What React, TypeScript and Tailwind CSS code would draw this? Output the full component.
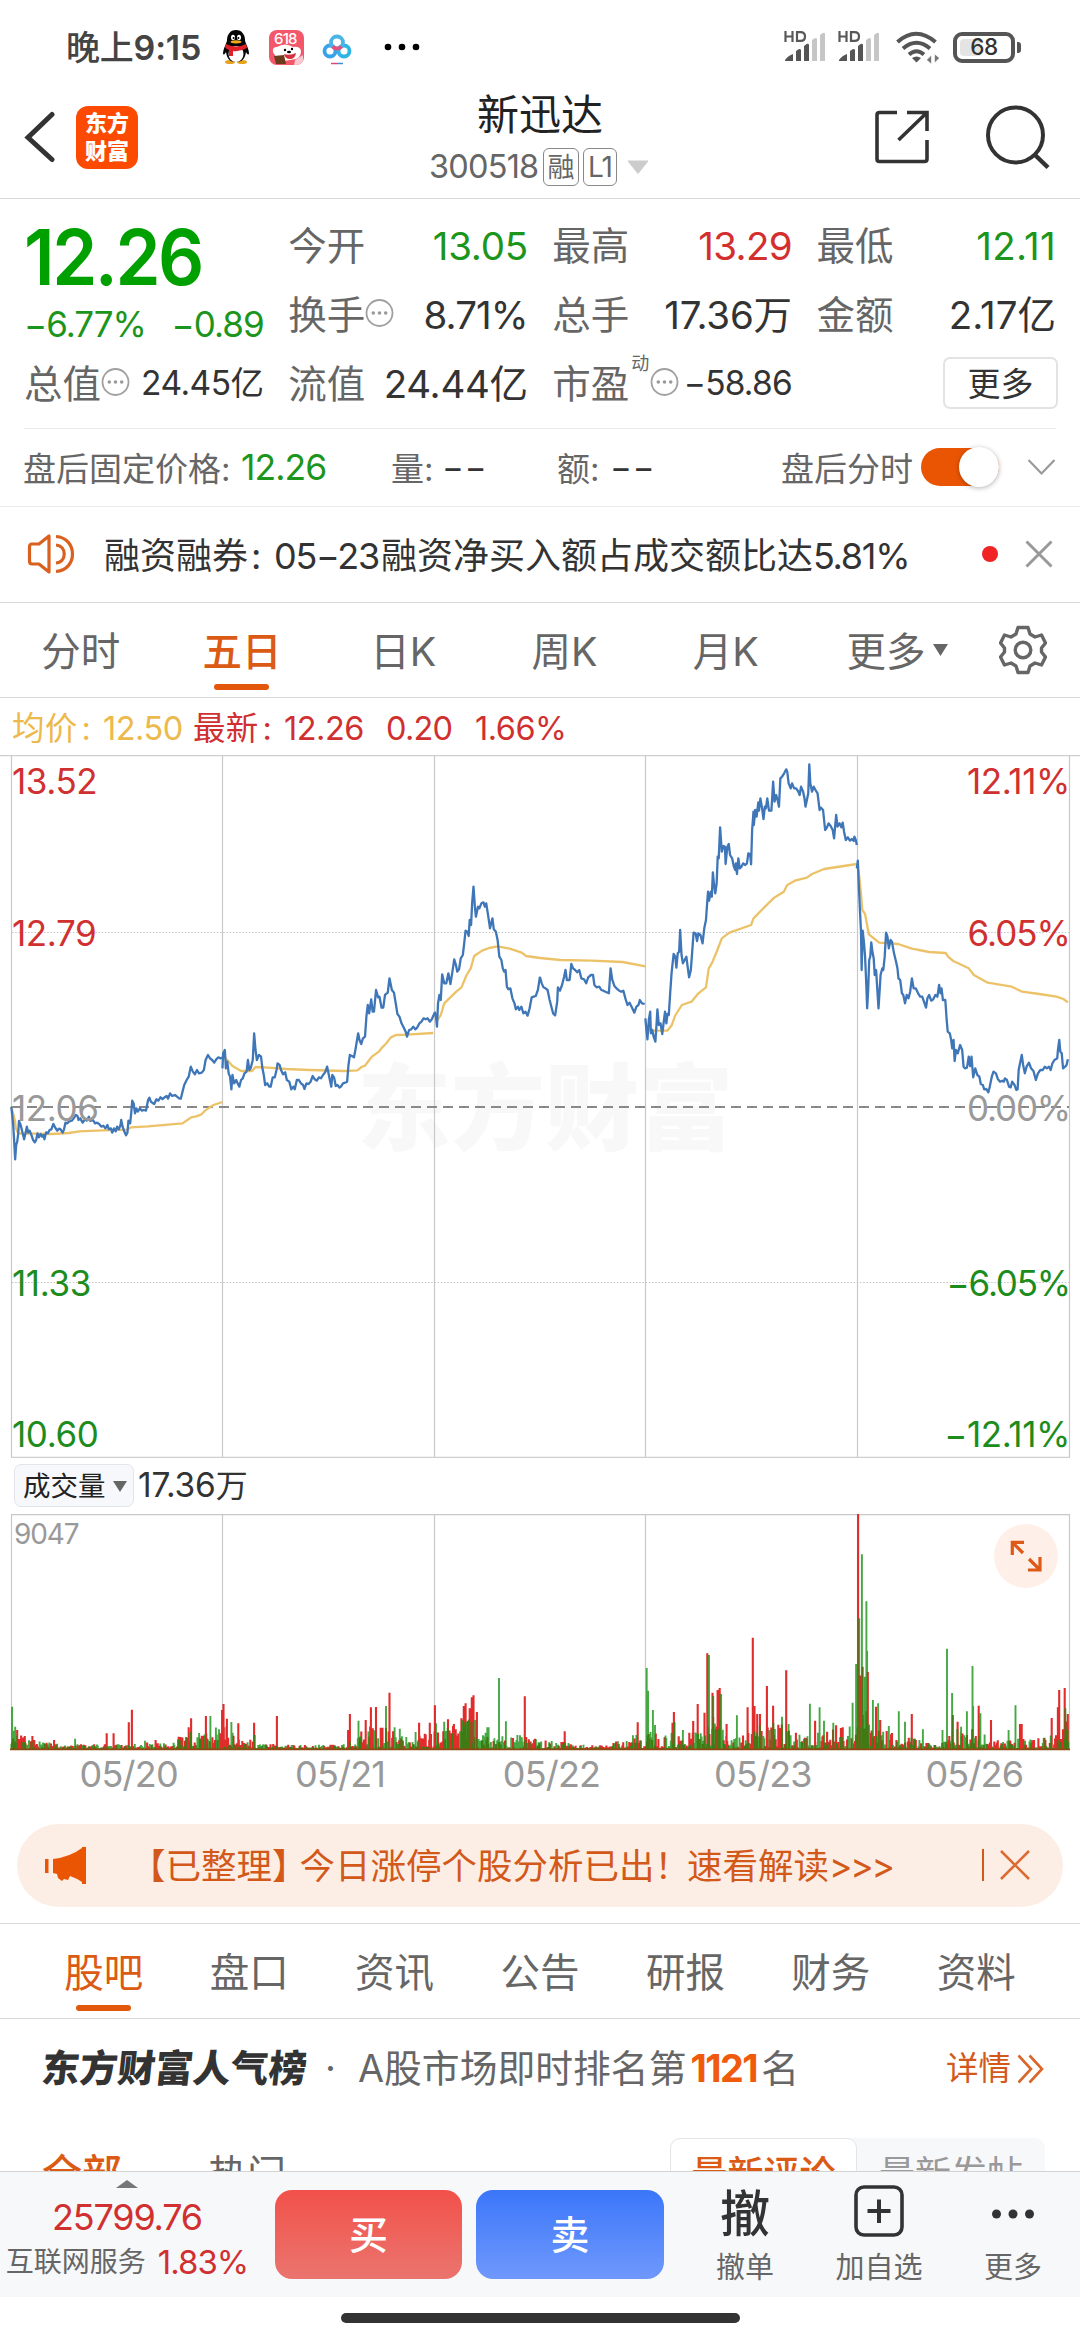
import React from "react";

type Pt = string;

/* ---------- price chart data ---------- */
const priceLeft: Pt[] = [
  "33,1101 38,1150 41,1200 44,1258 47,1215 50,1205 53,1180 55,1143 60,1155 64,1172 70,1198 74,1180 78,1160 82,1178 86,1172 90,1182 96,1200 101,1207 105,1200 109,1180 113,1192 118,1182 122,1190 126,1185 129,1198 134,1177 139,1180 144,1170 149,1168 155,1152 160,1162 166,1172 171,1166 176,1168 182,1178 186,1168 190,1148 195,1150 200,1145 205,1143 209,1142 214,1135 220,1125 225,1128 228,1140 233,1135 240,1148 247,1138 252,1142 258,1130 262,1143 270,1140 276,1150 282,1148 288,1152 294,1160 300,1157 306,1165 312,1155 316,1168 322,1165 326,1178 331,1165 336,1174 340,1160 345,1168 350,1155 352,1140 356,1160 360,1172 366,1186 370,1178 373,1142 378,1150 381,1120 384,1082 388,1090 392,1120 396,1105 400,1115 406,1105 412,1112 418,1110 424,1112 430,1080 434,1073 438,1085 442,1088 448,1092 454,1078 460,1082 466,1072 472,1077 478,1072 484,1068 488,1076 494,1060 500,1068 508,1065 514,1070 520,1075 525,1076 530,1055 535,1035 542,1020 548,1010 554,980 560,995 566,1003 572,990 578,1000 586,998 592,990 597,960 604,945 610,955 616,960 622,968 628,958 634,952 640,955 646,953",
  "646,985 648,940 653,930 656,985 660,965 664,1000 668,1010 672,1048 675,1005 680,1030 686,1020 690,1030 695,1040 700,1020 705,1015 710,1000 716,995 720,960 724,990 728,985 734,960 738,880 742,930 746,960 752,945 758,950 762,985 766,1005 770,1035 776,1030 782,1040 786,1040 792,1012 798,1012 803,990 806,970 812,975 816,990 822,1003 828,997 833,1020 840,1025 846,1048 852,1040 856,1048 862,1020 868,1020 874,1030 880,1035 884,1047 890,1030 896,1032 902,1025 908,1008 914,1018 920,1022 926,1012 932,1015 938,1005 944,997 950,980 955,1005 962,1040 965,1005 970,1012 975,1038 980,1035 986,1043 990,1040 996,1030 1002,1028 1008,1025 1012,975 1016,945 1022,948 1028,952 1032,930 1036,905 1040,880 1044,900 1049,912 1054,895 1060,890 1064,830 1068,795 1072,820 1078,778 1082,815 1086,815 1092,750 1098,772 1102,770 1108,803 1113,803 1118,765 1126,758 1131,715 1138,750 1144,758 1150,795 1154,822 1160,830 1166,850 1172,862 1178,875 1182,890 1188,870 1194,868 1200,860 1206,868 1212,862 1218,850 1224,845 1230,835 1236,838 1242,835 1248,845 1254,838 1258,828 1262,820",
  "1262,815 1266,830 1269,860 1272,790 1276,765 1280,780 1284,703 1290,730 1296,730 1302,700 1308,732 1313,700 1316,680 1319,658 1324,675 1328,695 1333,688 1338,655 1344,645 1348,610 1352,572 1357,575 1361,588 1364,540 1368,555 1371,490 1375,440 1379,500 1382,530 1388,500 1392,505 1398,490 1404,487 1408,500 1412,490 1418,530 1423,565 1430,535 1434,568 1440,575 1445,600 1450,650 1456,660 1460,685 1464,695 1468,690 1472,740 1476,748 1482,745 1488,775 1494,790 1498,808 1504,800 1508,810 1514,800 1520,820 1526,815 1532,827 1538,805 1544,772 1550,770 1556,768 1562,750 1568,710",
];
const priceRight: Pt[] = [
  "0,712 5,730 10,742 16,745 22,750 28,780 33,800 38,820 44,826 50,785 52,742 58,752 64,735 70,710 74,690 78,720 86,720 91,672 96,685 102,690 108,697 114,690 120,715 128,718 134,730 140,712 148,705 154,705 158,735 164,742 172,740 178,750 184,752 190,755 200,760 205,685 210,720 216,738 222,745 230,752 236,755 242,752 248,775 254,795 260,788 266,800 274,818 280,800 286,795 290,780 296,790 304,792",
  "306,835 309,870 312,898 316,840 320,815 322,880 326,870 330,890 335,905 338,860 341,808 345,855 350,850 355,882 360,840 363,815 367,850 370,822 374,825 378,760 382,700 388,642 393,650 396,683 400,640 404,635 407,570 411,645 415,670 420,660 425,650 430,690 433,712 438,690 442,635 446,578 452,580 456,603 460,580 466,585 472,610 477,565 482,540 486,480 488,455 491,482 496,455 499,470 502,397 505,430 509,460 513,430 516,350 519,355 523,262 528,335 533,318 537,320 539,372 544,320 548,312 552,345 558,355 563,380 567,390 569,370 572,402 576,355 580,385 585,380 590,370 596,375 601,370 605,340 610,342 613,373 616,270 620,215 621,255 625,210 629,230 634,187 636,212 640,175 645,205 649,237 653,200 656,205 660,175 665,212 672,212 677,125 681,185 686,165 690,180 694,200 698,115 703,110 709,100 715,88 718,95 722,130 728,145 732,130 738,145 744,145 750,155 754,165 758,140 764,155 768,175 771,200 775,180 779,160 782,73 785,130 790,155 795,140 800,150 806,160 812,210 816,203 822,210 828,270 832,265 838,250 844,258 850,270 854,295 860,225 864,260 870,250 875,262 879,248 883,275 888,300 894,292 900,302 906,297 911,303 913,290 917,300 920,315",
  "920,385 923,362 926,440 930,530 932,570 934,690 937,572 941,610 944,650 947,720 950,805 953,750 956,660 959,650 962,607 966,640 969,655 972,705 976,690 979,740 983,805 987,740 989,705 994,685 997,690 1001,650 1005,578 1009,590 1013,625 1018,600 1022,605 1028,640 1034,665 1038,685 1041,715 1046,720 1051,760 1055,765 1060,790 1065,765 1070,775 1075,755 1080,715 1085,745 1091,745 1098,760 1104,770 1110,770 1115,785 1121,803 1125,775 1130,765 1136,782 1142,778 1148,765 1154,770 1159,735 1163,760 1166,745 1170,780 1177,780 1181,840 1184,875 1190,880 1194,900 1197,925 1201,900 1204,963 1208,930 1213,940 1220,915 1226,930 1230,980 1234,985 1240,983 1245,950 1249,978 1253,950 1258,1012 1264,985 1270,1005 1276,1010 1280,1032 1286,1035 1290,1048 1296,1047 1302,1057 1306,1040 1312,1010 1317,995 1324,1000 1330,1018 1336,1025 1342,1022 1347,1025 1350,1015 1356,1020 1362,1040 1367,1042 1371,1025 1378,1035 1383,1050 1387,1048 1390,990 1394,970 1399,945 1403,975 1408,1000 1413,980 1420,968 1426,985 1433,993 1440,1020 1446,1000 1453,990 1460,990 1466,980 1472,985 1478,980 1483,990 1488,970 1494,960 1502,955 1504,930 1508,900 1511,935 1515,940 1519,985 1525,980 1529,975 1533,958",
];
const avgLeft: Pt[] = [
  "33,1101 38,1120 43,1140 46,1165 52,1178 60,1181 100,1181 150,1182 200,1179 230,1174 300,1171 370,1169 380,1162 430,1159 530,1150 540,1143 555,1132 570,1129 585,1123 595,1112 605,1105 620,1095 646,1086",
  "650,950 660,960 675,978 690,987 700,993 732,993 742,981 780,983 830,987 900,990 1000,993 1038,991 1050,981 1060,977 1070,963 1080,950 1100,935 1110,922 1120,912 1135,892 1150,885 1180,884 1258,879",
  "1264,830 1272,838 1280,825 1290,790 1310,770 1325,755 1340,742 1355,705 1367,685 1377,648 1400,632 1420,624 1445,619 1480,626 1515,638 1528,648 1568,654",
];
const avgRight: Pt[] = [
  "0,654 60,660 150,662 240,666 306,679",
  "310,880 318,866 330,872 370,872 383,855 392,828 412,795 440,785 460,760 482,742 490,685 500,668 515,630 528,595 550,578 613,555 620,535 660,493 680,473 708,455 718,435 740,422 775,413 790,402 825,387 920,372",
  "920,372 926,400 932,460 936,510 944,522 948,545 955,583 985,608 1040,612 1080,626 1130,636 1178,639 1185,650 1200,663 1245,685 1260,705 1300,728 1370,740 1400,755 1450,762 1500,770 1520,777 1533,787",
];

/* ---------- volume chart data ---------- */
type Bar = [number, number, "r" | "g"];
const envelope: [number, number][] = [
  [33, 60], [60, 42], [110, 22], [180, 12], [370, 14], [420, 18], [500, 14], [540, 50], [600, 60], [650, 75], [700, 35], [760, 15],
  [950, 10], [1000, 14], [1050, 60], [1120, 80], [1150, 50], [1200, 30], [1230, 45], [1300, 65], [1370, 100], [1390, 60], [1440, 35],
  [1510, 42], [1568, 28], [1690, 14], [1760, 8], [1800, 30], [1870, 50], [1900, 50], [1970, 45], [2040, 50], [2060, 110], [2100, 90],
  [2120, 24], [2170, 45], [2210, 75], [2270, 80], [2330, 50], [2420, 60], [2470, 70], [2485, 130], [2495, 240], [2520, 110], [2550, 60],
  [2620, 45], [2690, 18], [2730, 14], [2770, 60], [2840, 70], [2880, 25], [2970, 35], [3010, 30], [3070, 50], [3105, 90],
];
const reds: [number, number][] = [
  [50, 60], [72, 42], [94, 42], [157, 30], [310, 50], [330, 50], [374, 83], [383, 121], [452, 30], [519, 40], [548, 68], [555, 95],
  [598, 102], [645, 120], [649, 138], [659, 94], [692, 80], [738, 82], [804, 102], [1011, 60], [1016, 108], [1062, 90], [1077, 128],
  [1092, 129], [1131, 172], [1217, 82], [1248, 82], [1263, 134], [1301, 92], [1340, 95], [1347, 132], [1352, 140], [1364, 125],
  [1370, 158], [1375, 164], [1385, 114], [1524, 161], [1640, 56], [1852, 83], [1953, 82], [1957, 114], [2013, 87], [2026, 138],
  [2046, 112], [2054, 290], [2069, 172], [2084, 180], [2090, 186], [2110, 78], [2171, 128], [2186, 337], [2191, 132], [2199, 108],
  [2207, 108], [2227, 192], [2245, 133], [2283, 239], [2367, 88], [2402, 55], [2428, 74], [2492, 708], [2505, 250], [2520, 234],
  [2544, 130], [2556, 90], [2648, 108], [2767, 105], [2781, 85], [2842, 133], [2878, 90], [2962, 78], [2967, 78], [3054, 96],
  [3072, 128], [3076, 180], [3092, 186], [3101, 108],
];
const greens: [number, number][] = [
  [35, 130], [44, 70], [218, 34], [421, 28], [611, 102], [636, 62], [672, 84], [740, 45], [1041, 88], [1121, 132], [1146, 68],
  [1161, 64], [1207, 54], [1266, 80], [1290, 85], [1355, 85], [1380, 90], [1415, 68], [1419, 68], [1449, 216], [1469, 86],
  [1878, 246], [1882, 178], [1896, 120], [1902, 75], [1959, 84], [1983, 60], [2059, 285], [2071, 162], [2094, 168], [2140, 104],
  [2246, 82], [2271, 100], [2290, 78], [2352, 139], [2380, 128], [2393, 88], [2420, 82], [2476, 142], [2486, 258], [2495, 395],
  [2503, 587], [2511, 220], [2516, 446], [2518, 297], [2535, 150], [2550, 140], [2581, 72], [2610, 116], [2628, 85], [2680, 62],
  [2737, 60], [2750, 304], [2765, 171], [2791, 70], [2808, 116], [2824, 252], [2826, 132], [2847, 110], [2929, 60], [2949, 134],
  [3094, 125],
];

function envelopeAt(x: number) {
  for (let i = 1; i < envelope.length; i++) {
    const [x1, h1] = envelope[i];
    if (x <= x1) {
      const [x0, h0] = envelope[i - 1];
      return h0 + ((h1 - h0) * (x - x0)) / (x1 - x0);
    }
  }
  return envelope[envelope.length - 1][1];
}

function buildBars(): Bar[] {
  let seed = 20250526;
  const rnd = () => {
    seed = (seed * 1664525 + 1013904223) % 4294967296;
    return seed / 4294967296;
  };
  const bars: Bar[] = [];
  for (let x = 33; x < 3104; x += 2.56) {
    const h = 5 + envelopeAt(x) * Math.pow(rnd(), 1.6);
    bars.push([x, h, rnd() > 0.42 ? "r" : "g"]);
  }
  reds.forEach(([x, h]) => bars.push([x, h, "r"]));
  greens.forEach(([x, h]) => bars.push([x, h, "g"]));
  return bars.sort((a, b) => a[0] - b[0]);
}
const bars = buildBars();
const barPath = (c: "r" | "g") =>
  bars
    .filter((b) => b[2] === c)
    .map(([x, h]) => `M${(x / 2.904).toFixed(1)} 236v-${(h / 3).toFixed(1)}`)
    .join("");

const gridX = [11.5, 222.5, 434.5, 645.5, 857.5, 1069.5];

function Lines({ sets, color, x }: { sets: Pt[]; color: string; x: number }) {
  return (
    <g transform={`translate(${x} -15) scale(0.34436 0.33333)`}>
      {sets.map((p, i) => (
        <polyline key={i} points={p} fill="none" stroke={color} strokeWidth="2.3" strokeLinejoin="round" vectorEffect="non-scaling-stroke" />
      ))}
    </g>
  );
}

function PriceChart() {
  return (
    <div className="relative h-[703px] w-full">
      <div className="absolute left-[357px] top-[294px] flex h-[120px] items-center text-[94px] font-black leading-none text-[#f8f8f8]">东方财富</div>
      <svg className="absolute inset-0" width="1080" height="703" viewBox="0 0 1080 703">
        <path d="M0 .5H1080M11 702.5H1070" stroke="#cfcfcf" strokeWidth="1.4" fill="none" />
        {gridX.map((x) => (
          <path key={x} d={`M${x} 1V702`} stroke="#c8c8c8" strokeWidth="1.2" />
        ))}
        <path d="M12 177.5H1069M12 527.5H1069" stroke="#c4c4c4" strokeWidth="1.2" strokeDasharray="1.5 1.7" />
        <path d="M11 352H1069" stroke="#888" strokeWidth="2" strokeDasharray="10 6" />
        <Lines sets={avgLeft} color="#ecc268" x={0} />
        <Lines sets={avgRight} color="#ecc268" x={540} />
        <Lines sets={priceLeft} color="#3f76b8" x={0} />
        <Lines sets={priceRight} color="#3f76b8" x={540} />
      </svg>
      <AxisLabel cls="left-[12px] top-[6px] text-[#d03030]">13.52</AxisLabel>
      <AxisLabel cls="left-[12px] top-[158px] text-[#d03030]">12.79</AxisLabel>
      <AxisLabel cls="left-[12px] top-[333px] text-[#999]">12.06</AxisLabel>
      <AxisLabel cls="left-[12px] top-[508px] text-[#1c8c1c]">11.33</AxisLabel>
      <AxisLabel cls="left-[12px] top-[659px] text-[#1c8c1c]">10.60</AxisLabel>
      <AxisLabel cls="right-[10px] top-[6px] text-[#d03030]">12.11%</AxisLabel>
      <AxisLabel cls="right-[10px] top-[158px] text-[#d03030] tracking-[-1px]">6.05%</AxisLabel>
      <AxisLabel cls="right-[10px] top-[333px] text-[#999] tracking-[-1.200px]">0.00%</AxisLabel>
      <AxisLabel cls="right-[10px] top-[508px] text-[#1c8c1c] tracking-[-1.200px]">−6.05%</AxisLabel>
      <AxisLabel cls="right-[10px] top-[659px] text-[#1c8c1c]">−12.11%</AxisLabel>
    </div>
  );
}

function AxisLabel({ cls, children }: { cls: string; children: React.ReactNode }) {
  return (
    <span className={`absolute text-[35px] leading-[40px] ${cls.includes("tracking") ? "" : "tracking-[-0.4px]"} ${cls}`}>{children}</span>
  );
}

function VolumeChart() {
  return (
    <div className="relative h-[237px] w-full">
      <svg className="absolute inset-0" width="1080" height="237" viewBox="0 0 1080 237">
        <path d="M11 .5H1070" stroke="#c8c8c8" strokeWidth="1.4" />
        {gridX.map((x) => (
          <path key={x} d={`M${x} 1V236`} stroke="#c8c8c8" strokeWidth="1.2" />
        ))}
        <path d={barPath("r")} stroke="#e02424" strokeWidth="2.1" opacity=".96" />
        <path d={barPath("g")} stroke="#12900f" strokeWidth="1.9" opacity=".78" />
        <path d="M10 235.3H1070" stroke="#8c4a12" strokeWidth="1.8" />
      </svg>
      <span className="absolute left-[14px] top-[4px] text-[28px] leading-[32px] tracking-[-1.100px] text-[#999]">9047</span>
      <div className="absolute right-[22px] top-[10px] flex size-[64px] items-center justify-center rounded-full bg-[#fef0e8]">
        <svg width="32" height="32" viewBox="0 0 32 32" fill="none" stroke="#dd5a18" strokeWidth="3.2">
          <path d="M14 2.300H2.300V15M2.500 2.500L13 13M18 30H30V17M30 30L19 19" />
        </svg>
      </div>
    </div>
  );
}

/* ---------- small icons ---------- */
function Signal() {
  return (
    <svg width="42" height="36" viewBox="0 0 42 36">
      <g fill="none" stroke="#585858" strokeWidth="2.2">
        <path d="M1.500 2v11M8.500 2v11M1.500 7.500h7M13 3.100h3.500c3 0 4.500 1.800 4.500 4.400s-1.500 4.400-4.500 4.400H13z" />
      </g>
      <path d="M1 32v-1c2-3 5-5 8-6v7zM12 32V22l3-2q2 0 2 1v11zM20 32V17l3-2.200q2 0 2 1V32z" fill="#555" />
      <path d="M28 32V11l3-2q2 0 2 1v22zM36 32V6l3-2.200q2 0 2 1V32z" fill="#c6c6c6" />
    </svg>
  );
}

function InfoDots() {
  return (
    <svg width="29" height="30" viewBox="0 0 29 30" className="mb-[4px] shrink-0">
      <circle cx="14.500" cy="15" r="13" fill="none" stroke="#a0a0a0" strokeWidth="1.800" />
      <g fill="#999">
        <circle cx="8.300" cy="15" r="1.800" />
        <circle cx="14.500" cy="15" r="1.800" />
        <circle cx="20.700" cy="15" r="1.800" />
      </g>
    </svg>
  );
}

function StatusBar() {
  return (
    <div className="flex h-[94px] items-center pl-[66px]">
      <span className="w-[148px] whitespace-nowrap pt-[2px] text-[34px] font-medium leading-none tracking-[-0.2px] text-[#444]">
        晚上<span className="font-semibold">9:15</span>
      </span>
      <svg className="ml-[5px]" width="34" height="36" viewBox="0 0 34 36">
        <ellipse cx="11" cy="33" rx="5" ry="2" fill="#e8a21c" />
        <ellipse cx="23" cy="33" rx="5" ry="2" fill="#e8a21c" />
        <path d="M17 1c-6 0-9 5-9 10 0 3-4 8-4 14 1 1 2 0 3-2 1 7 4 10 10 10s9-3 10-10c1 2 2 3 3 2 0-6-4-11-4-14 0-5-3-10-9-10z" fill="#050505" />
        <ellipse cx="17" cy="25" rx="7.500" ry="8" fill="#fff" />
        <ellipse cx="14" cy="8.500" rx="2" ry="2.800" fill="#fff" />
        <ellipse cx="20" cy="8.500" rx="2" ry="2.800" fill="#fff" />
        <circle cx="14.600" cy="9" r="1" /><circle cx="19.400" cy="9" r="1" />
        <ellipse cx="17" cy="12.800" rx="5.500" ry="1.600" fill="#f0a81c" />
        <path d="M7 15q10 5 20 0l1 4q-7 4-14 3v5h-4v-6q-3-1-4-3z" fill="#e2202a" />
      </svg>
      <div className="relative ml-[16px] h-[35px] w-[35px] overflow-hidden rounded-[8px] bg-[#f4566a]">
        <span className="absolute left-[5px] top-0 text-[15px] font-medium leading-[18px] tracking-[-0.8px] text-white">618</span>
        <svg className="absolute inset-0" width="35" height="35" viewBox="0 0 35 35">
          <path d="M4 22q-1-5 4-5 8-5 16 0 7-1 8 4 0 6-5 8l-12 2-8-4z" fill="#fff" />
          <circle cx="16" cy="20" r="1.200" /><circle cx="23" cy="19" r="1.200" /><ellipse cx="20" cy="22" rx="2" ry="1.200" />
          <path d="M15 24q6 2 12-1-1 6-6 6-5 0-6-5z" fill="#d8303c" />
          <path d="M5 26l10-1 2 9H7z" fill="#6a3c1c" />
          <path d="M26 30l8-5v10h-9z" fill="#fbc9cf" />
        </svg>
      </div>
      <svg className="ml-[16px]" width="34" height="36" viewBox="0 0 34 36" fill="none" strokeWidth="3.800">
        <circle cx="10" cy="22" r="5.500" stroke="#3aa2e8" />
        <circle cx="24" cy="22" r="5.500" stroke="#2fb4e4" />
        <circle cx="17" cy="13.500" r="6" stroke="#49b5e6" />
        <path d="M12.500 17.500a6 6 0 0 0 9 0" stroke="#e0527c" />
        <path d="M11 34.500h6" stroke="#d94a76" strokeWidth="1.500" /><path d="M17 34.500h6" stroke="#3a8ee0" strokeWidth="1.500" />
      </svg>
      <svg className="ml-[30px]" width="36" height="8" viewBox="0 0 36 8">
        <circle cx="4" cy="4" r="3.300" /><circle cx="18" cy="4" r="3.300" /><circle cx="32" cy="4" r="3.300" />
      </svg>
      <div className="ml-[364px] flex items-center">
        <Signal />
        <span className="w-[12px]" />
        <Signal />
        <svg className="ml-[15px]" width="44" height="36" viewBox="0 0 44 36" fill="none" stroke="#555" strokeWidth="4">
          <path d="M2.500 13Q21 -3.500 40.500 13" />
          <path d="M8 19.500Q21.500 8 35 19.500" />
          <path d="M14 25.500Q21.500 19 29 25.500" />
          <path d="M17 29q4.500-3 9 0l-4.500 4.500z" fill="#555" stroke="none" />
          <path d="M36.500 35v-9l-5 5zM39.500 25v9l5-5z" fill="#777" stroke="#fff" strokeWidth=".6" />
        </svg>
        <div className="relative ml-[14px] flex h-[31px] w-[62px] items-center justify-center rounded-[9px] border-4 border-[#555]">
          <span className="absolute left-[3px] top-[3px] h-[17px] w-[20px] rounded-l-[4px] bg-[#e4e4e4]" />
          <span className="relative text-[22.500px] font-medium leading-none tracking-[-0.4px] text-[#333]">68</span>
        </div>
        <span className="ml-[2px] h-[11px] w-[4px] rounded-r-[3px] bg-[#555]" />
      </div>
    </div>
  );
}

function Header() {
  return (
    <header className="flex h-[105px] items-center border-b-[1.500px] border-[#d9d9d9] pb-[18px] pl-[24px] pr-[28px]">
      <svg width="32" height="52" viewBox="0 0 32 52" fill="none" stroke="#333" strokeWidth="5" strokeLinecap="round">
        <path d="M28 3.500L4 26.500L28 48.500" strokeLinejoin="miter" />
      </svg>
      <div className="ml-[20px] flex h-[63px] w-[62px] flex-col items-center justify-center rounded-[12px] bg-[#fd4a02] text-[22px] font-black leading-[28px] text-white">
        <span className="h-[28px]">东方</span>
        <span className="h-[28px]">财富</span>
      </div>
      <div className="ml-[291px] flex w-[220px] flex-col">
        <h1 className="ml-[48px] text-[42px] font-normal leading-[52px] text-[#222]">新迅达</h1>
        <div className="mt-[7px] flex h-[38px] items-center text-[#666]">
          <span className="w-[114px] pt-[2px] text-[32.500px] leading-none tracking-[-0.8px]">300518</span>
          <span className="flex h-[38px] w-[36px] items-center justify-center rounded-[6px] border-[1.500px] border-[#888] pt-[1px] text-[27px] leading-none">融</span>
          <span className="ml-[4px] flex h-[38px] w-[34px] items-center justify-center rounded-[6px] border-[1.500px] border-[#888] text-[28px] leading-none tracking-[-1px]">L1</span>
          <svg className="ml-[10px]" width="22" height="14" viewBox="0 0 22 14"><path d="M1 1H21L11 13.500z" fill="#ccc" stroke="#ccc" strokeLinejoin="round" /></svg>
        </div>
      </div>
      <svg className="ml-[226px]" width="54" height="54" viewBox="0 0 54 54" fill="none" stroke="#333" strokeWidth="3.600">
        <path d="M22 2.500H4.500Q2 2.500 2 5V49Q2 51.500 4.500 51.500H49.500Q52 51.500 52 49V30M32 2.500H52V21M51.500 3L23.500 30" />
      </svg>
      <svg className="ml-[57px]" width="64" height="66" viewBox="0 0 64 66" fill="none" stroke="#333" strokeWidth="4">
        <circle cx="29.500" cy="31" r="27.500" />
        <path d="M48 50L62 63.500" strokeWidth="4.500" />
      </svg>
    </header>
  );
}

function Cell({ label, value, cls, dots }: { label: string; value: string; cls: string; dots?: boolean }) {
  return (
    <div className="flex h-[69px] items-center justify-between">
      <span className="flex items-center text-[#666]">
        {label}
        {dots && <InfoDots />}
      </span>
      <span className={cls}>{value}</span>
    </div>
  );
}

function Quote() {
  return (
    <section className="mx-[24px] h-[229.500px] border-b-[1.500px] border-[#eaeaea] pt-[12.500px]">
      <div className="grid grid-cols-4 gap-x-[24.500px] whitespace-nowrap text-[38.500px] leading-none">
        <div className="flex h-[138px] flex-col">
          <span className="mt-[6px] origin-left scale-x-[0.94] text-[77px] font-semibold leading-[78px] tracking-[-2.600px] text-[#00a000]">12.26</span>
          <span className="mt-[9px] flex h-[40px] items-center justify-between text-[35px] tracking-[-1px] text-[#1c951c]">
            <span>−6.77%</span>
            <span>−0.89</span>
          </span>
        </div>
        <div>
          <Cell label="今开" value="13.05" cls="text-[#1c951c] tracking-[-0.300px]" />
          <Cell label="换手" value="8.71%" cls="text-[#333] tracking-[-0.900px]" dots />
        </div>
        <div>
          <Cell label="最高" value="13.29" cls="text-[#d42f2f] tracking-[-0.700px]" />
          <Cell label="总手" value="17.36万" cls="text-[#333] tracking-[-0.200px]" />
        </div>
        <div>
          <Cell label="最低" value="12.11" cls="text-[#1c951c] tracking-[0.300px]" />
          <Cell label="金额" value="2.17亿" cls="text-[#333]" />
        </div>
        <Cell label="总值" value="24.45亿" cls="text-[#333] text-[33.500px] tracking-[-0.500px]" dots />
        <Cell label="流值" value="24.44亿" cls="text-[#333] tracking-[-0.300px]" />
        <div className="flex h-[69px] items-center text-[#666]">
          市盈<sup className="mt-[-22px] ml-[2px] text-[18px] leading-none">动</sup>
          <span className="ml-[1px]"><InfoDots /></span>
          <span className="ml-auto text-[33.500px] tracking-[-0.8px] text-[#333]">−58.86</span>
        </div>
        <div className="flex h-[69px] items-center justify-end">
          <span className="-mr-[2px] -mt-[2px] flex h-[52px] w-[115px] items-center justify-center rounded-[7px] border-2 border-[#e3e3e3] pt-[2px] text-[33px] text-[#333]">更多</span>
        </div>
      </div>
    </section>
  );
}

function AfterHours() {
  return (
    <section className="flex h-[78px] items-center whitespace-nowrap border-b-[1.500px] border-[#eaeaea] pl-[23px] text-[33px] leading-none text-[#666]">
      <span className="w-[218px] pt-[4px]">盘后固定价格:</span>
      <span className="w-[150px] pt-[2px] text-[35.500px] tracking-[-0.900px] text-[#1c951c]">12.26</span>
      <span className="w-[51px] pt-[4px]">量:</span>
      <span className="w-[115px] tracking-[1px] text-[#333]">−−</span>
      <span className="w-[53px] pt-[4px]">额:</span>
      <span className="w-[171px] tracking-[1px] text-[#333]">−−</span>
      <span className="w-[140px] pt-[4px]">盘后分时</span>
      <span className="flex h-[38px] w-[78px] items-center justify-end rounded-full bg-[#ea5504]">
        <span className="size-[40px] rounded-full bg-white shadow-[0_1px_5px_rgba(0,0,0,0.3)]" />
      </span>
      <svg className="ml-[28px]" width="29" height="18" viewBox="0 0 29 18" fill="none" stroke="#999" strokeWidth="2.200"><path d="M1.500 2L14.500 15.500L27.500 2" /></svg>
    </section>
  );
}

function News() {
  return (
    <section className="flex h-[96px] items-center whitespace-nowrap border-b-[1.500px] border-[#d9d9d9] pl-[27px] text-[36px] leading-none text-[#333]">
      <svg width="48" height="42" viewBox="0 0 48 42" fill="none" stroke="#d9601f" strokeWidth="3.200" strokeLinejoin="round">
        <path d="M22 3V39L12 31H5Q2.500 31 2.500 28V14Q2.500 11 5 11H12Z" />
        <path d="M29 3.500C51 5 51 37 29 38.500M29 12C40 13 40 29 29 30" />
      </svg>
      <span className="ml-[29px] w-[877px] pt-[4px]">
        融资融券<span className="inline-block w-[26px] pl-[3px]">:</span><span className="tracking-[-1.300px]">05−23</span><span className="ml-[2px]">融资净买入额占成交额比达</span><span className="tracking-[-1.300px]">5.81%</span>
      </span>
      <span className="ml-[1px] size-[16px] rounded-full bg-[#f02424]" />
      <svg className="ml-[27px]" width="28" height="28" viewBox="0 0 28 28" stroke="#999" strokeWidth="3"><path d="M1.500 1.500L26.500 26.500M26.500 1.500L1.500 26.500" /></svg>
    </section>
  );
}

function ChartTabs() {
  const tabs = ["分时", "五日", "日K", "周K", "月K"];
  return (
    <nav className="flex h-[95px] items-center whitespace-nowrap border-b-[1.500px] border-[#d9d9d9] text-[39.500px] leading-none text-[#666]">
      {tabs.map((t, i) => (
        <span key={t} className={`relative flex h-full w-[161.300px] items-center justify-center pt-[6px] ${i === 1 ? "font-medium text-[#db5a14]" : ""}`}>
          {t}
          {i === 1 && <i className="absolute bottom-[7px] h-[6px] w-[55px] rounded-full bg-[#e2570c]" />}
        </span>
      ))}
      <span className="ml-[40px] pt-[6px]">更多</span>
      <svg className="ml-[8px]" width="15" height="12" viewBox="0 0 15 12"><path d="M0 0H15L7.500 12z" fill="#666" /></svg>
      <svg className="ml-[51px]" width="48" height="50" viewBox="0 0 48 50" fill="none" stroke="#666" strokeWidth="3.400" strokeLinejoin="round">
        <path d="M19 2.500h10l2 6.500 5 3 6.500-2 4 8-4 5v4l4 5-4 8-6.500-2-5 3-2 6.500H19l-2-6.500-5-3-6.500 2-4-8 4-5v-4l-4-5 4-8 6.500 2 5-3z" />
        <circle cx="24" cy="25" r="7.800" />
      </svg>
    </nav>
  );
}

function Megaphone() {
  return (
    <svg width="43" height="37" viewBox="0 0 43 37" fill="#ea5504">
      <path d="M1 12h3.500v14H1zM9 12Q26 10 38 1V0h4v37h-4v-2Q32 31 26 29l-2 4-4-1-2 2-4-3-1-4-4-1z" />
    </svg>
  );
}

function Banner() {
  return (
    <div className="mx-[17px] mt-[27px] flex h-[83px] items-center whitespace-nowrap rounded-full bg-[#fceee5] pl-[27px] text-[35.500px] leading-none text-[#d2591a]">
      <Megaphone />
      <span className="ml-[43px] w-[852px] pt-[4px]">
        【已整理<span className="mr-[-8px]">】</span>今日涨停个股分析已出<span className="mr-[-3px]">！</span>速看解读<span className="tracking-[-2.300px]">&gt;&gt;&gt;</span>
      </span>
      <span className="h-[32px] w-[1.500px] bg-[#d2591a]" />
      <svg className="ml-[15px]" width="32" height="32" viewBox="0 0 32 32" stroke="#dd6a30" strokeWidth="2.600"><path d="M2 2L30 30M30 2L2 30" /></svg>
    </div>
  );
}

function ContentTabs() {
  const tabs = ["股吧", "盘口", "资讯", "公告", "研报", "财务", "资料"];
  return (
    <nav className="mt-[16px] flex h-[96px] items-center border-y-[1.500px] border-[#d9d9d9] px-[31px] text-[39.500px] leading-none text-[#666]">
      {tabs.map((t, i) => (
        <span key={t} className={`relative flex h-full flex-1 items-center justify-center pt-[7px] ${i === 0 ? "text-[#db5a14]" : ""}`}>
          {t}
          {i === 0 && <i className="absolute bottom-[7px] h-[6px] w-[55px] rounded-full bg-[#e2570c]" />}
        </span>
      ))}
    </nav>
  );
}

function BottomBar() {
  return (
    <footer className="flex h-[126px] border-t-[1.500px] border-[#d3d3d3] bg-[#f7f8fa] leading-none">
      <div className="flex w-[254px] flex-col items-center whitespace-nowrap">
        <svg className="mt-[8px]" width="22" height="8" viewBox="0 0 22 8"><path d="M0 8L11 0L22 8z" fill="#777" /></svg>
        <span className="mt-[11px] text-[36px] tracking-[-1.200px] text-[#d03030]">25799.76</span>
        <span className="mt-[11px] flex items-center text-[28px] text-[#666]">
          互联网服务<span className="ml-[12px] text-[33px] tracking-[-1px] text-[#d03030]">1.83%</span>
        </span>
      </div>
      <button className="ml-[21px] mt-[18px] h-[89px] w-[187px] rounded-[17px] bg-linear-to-b from-[#f2504a] to-[#ea746e] text-[39px] font-medium text-white">买</button>
      <button className="ml-[14px] mt-[18px] h-[89px] w-[188px] rounded-[17px] bg-linear-to-b from-[#3b76f9] to-[#6f98fc] text-[39px] font-medium text-white">卖</button>
      <div className="flex w-[162px] flex-col items-center pt-[15px]">
        <span className="text-[50px] font-medium leading-[54px] text-[#333]">撤</span>
        <span className="mt-[11px] text-[29px] leading-[32px] text-[#666]">撤单</span>
      </div>
      <div className="flex w-[106px] flex-col items-center pt-[13px]">
        <svg width="50" height="52" viewBox="0 0 50 52" fill="none" stroke="#333" strokeWidth="3.600">
          <rect x="2" y="2" width="46" height="48" rx="8" />
          <path d="M13.500 26h23M25 14.500v23.500" strokeWidth="4" />
        </svg>
        <span className="mt-[15px] text-[29px] leading-[32px] text-[#666]">加自选</span>
      </div>
      <div className="flex flex-1 flex-col items-center pl-[14px] pt-[37px]">
        <svg width="44" height="10" viewBox="0 0 44 10" fill="#333"><circle cx="5.500" cy="5" r="4.500" /><circle cx="22" cy="5" r="4.500" /><circle cx="38.500" cy="5" r="4.500" /></svg>
        <span className="mt-[33px] text-[29px] leading-[32px] text-[#666]">更多</span>
      </div>
    </footer>
  );
}

export default function App() {
  return (
    <div className="h-[2340px] w-[1080px] overflow-hidden bg-white [font-family:Inter,'Noto_Sans_CJK_SC',sans-serif]">
      <StatusBar />
      <Header />
      <Quote />
      <AfterHours />
      <News />
      <ChartTabs />
      <div className="flex h-[57px] items-center whitespace-nowrap pl-[12px] pt-[6px] text-[32.500px] leading-none tracking-[-0.8px] text-[#d03030]">
        <span className="w-[91px] tracking-[0.300px] text-[#ecb94c]">均价<span className="pl-[4px]">:</span></span>
        <span className="w-[90px] tracking-[-0.500px] text-[#ecb94c]">12.50</span>
        <span className="w-[91px] tracking-[0.300px]">最新<span className="pl-[4px]">:</span></span>
        <span className="w-[102px] tracking-[-0.500px]">12.26</span>
        <span className="w-[89px]">0.20</span>
        <span className="tracking-[-0.500px]">1.66%</span>
      </div>
      <PriceChart />
      <div className="flex h-[56px] items-center whitespace-nowrap pl-[14px] leading-none">
        <span className="flex h-[43px] w-[120px] items-center rounded-[7px] border-[1.500px] border-[#e2e5ec] bg-[#f7f8fb] pl-[8px] pt-[2px] text-[27.500px] text-[#222]">
          成交量
          <svg className="ml-[7px]" width="14" height="11" viewBox="0 0 14 11"><path d="M0 0H14L7 11z" fill="#666" /></svg>
        </span>
        <span className="ml-[4px] pt-[1px] text-[33.500px] tracking-[-0.200px] text-[#333]">17.36<span className="text-[32px]">万</span></span>
      </div>
      <VolumeChart />
      <div className="flex h-[46px] items-center pl-[23px] text-[36px] leading-none tracking-[-0.8px] text-[#999]">
        {["05/20", "05/21", "05/22", "05/23", "05/26"].map((d) => (
          <span key={d} className="w-[211.600px] text-center">{d}</span>
        ))}
      </div>
      <Banner />
      <ContentTabs />
      <div className="h-[152px] overflow-hidden">
        <div className="flex h-[98px] items-center whitespace-nowrap pl-[42px] pt-[3px] text-[37.800px] leading-none text-[#666]">
          <span className="inline-block w-[283px] -skew-x-6 font-black text-[#333]">东方财富人气榜</span>
          <span className="w-[33px]">·</span>
          <span>A股市场即时排名第</span>
          <span className="mx-[4px] font-bold tracking-[-1.500px] text-[#f05a0c]">1121</span>
          <span>名</span>
          <span className="ml-auto text-[32.500px] text-[#d2591a]">详情</span>
          <svg className="ml-[6px] mr-[35px]" width="28" height="30" viewBox="0 0 28 30" fill="none" stroke="#d9662a" strokeWidth="2.600"><path d="M1.500 1.500L14 15L1.500 28.500M12.500 1.500L25 15L12.500 28.500" /></svg>
        </div>
        <div className="flex items-start whitespace-nowrap pl-[42px] pr-[35px] pt-[21px] leading-none">
          <span className="w-[166px] pt-[16px] text-[40px] font-medium text-[#db5a14]">全部</span>
          <span className="pt-[16px] text-[39px] text-[#666]">热门</span>
          <div className="ml-auto flex h-[70px] w-[375px] rounded-[10px] bg-[#f7f8fa] text-[36px]">
            <span className="w-[187px] rounded-[10px] border-[1.500px] border-[#e5e5e5] bg-white pt-[17px] text-center font-medium text-[#db5a14]">最新评论</span>
            <span className="flex-1 pt-[18px] text-center text-[#999]">最新发帖</span>
          </div>
        </div>
      </div>
      <BottomBar />
      <div className="mx-auto mt-[16px] h-[10px] w-[399px] rounded-full bg-[#333]" />
    </div>
  );
}
